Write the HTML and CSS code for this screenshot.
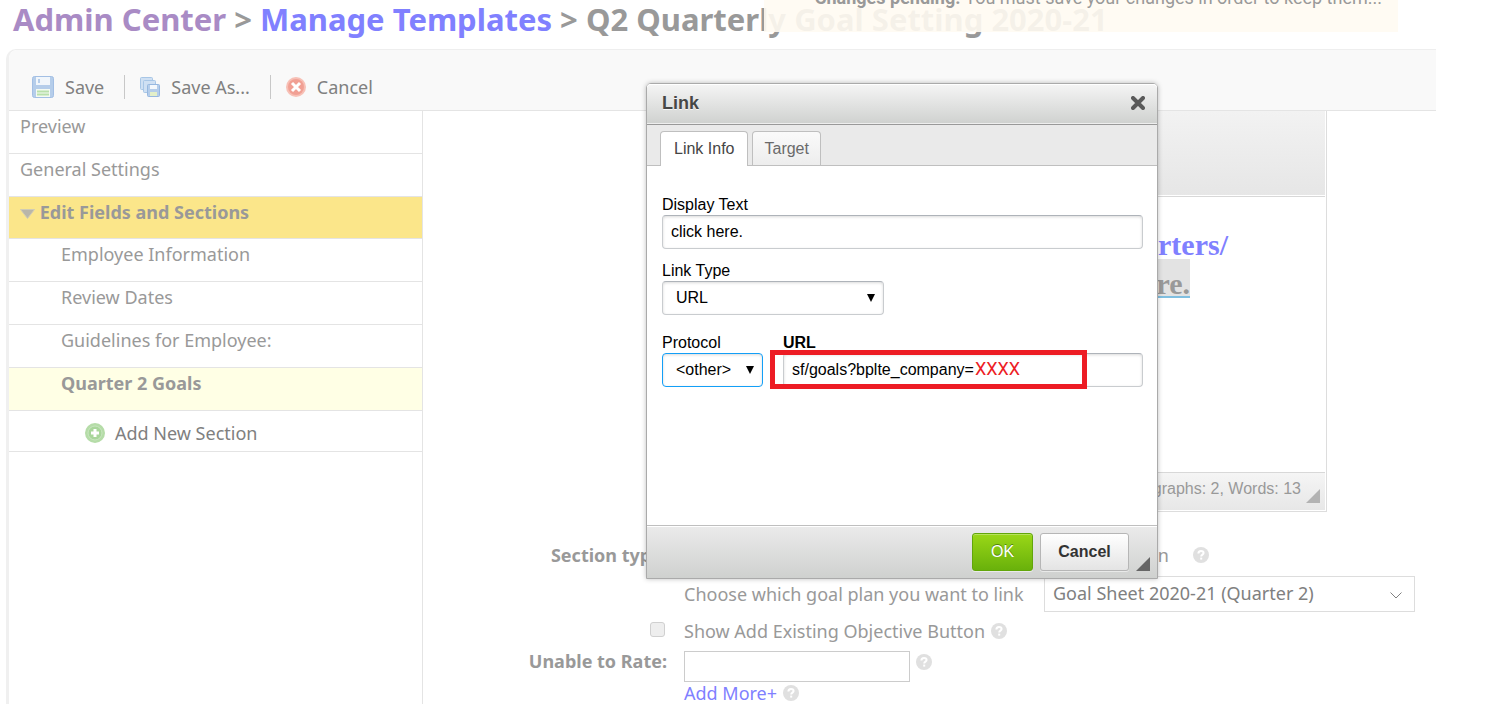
FILE: index.html
```html
<!DOCTYPE html>
<html lang="en">

<head>
  <meta charset="UTF-8">
  <meta name="viewport" content="width=device-width, initial-scale=1.0">
  <title>Manage Templates | Admin Center</title>
  <link rel="stylesheet" href="styles.css">
</head>

<body>
  <svg width="0" height="0" class="symbols" aria-hidden="true">
    <symbol id="icon-help" viewBox="0 0 16 16">
      <circle cx="8" cy="8" r="8" fill="#e0e0e0" />
      <path d="M5.4 6.4C5.4 4.700 6.500 3.900 8 3.900s2.600.8 2.600 2.200C10.600 7.700 8.200 7.700 8.200 9.600" fill="none" stroke="#fff" stroke-width="2" />
      <rect x="7.200" y="10.600" width="2" height="2" fill="#fff" />
    </symbol>
  </svg>

  <!-- Breadcrumb title -->
  <header>
    <h1><a href="#" class="visited">Admin Center</a> &gt; <a href="#">Manage Templates</a> &gt; Q2 Quarterly Goal Setting 2020-21</h1>
    <div class="notice">
      <svg width="14" height="14" viewBox="0 0 14 14" aria-hidden="true"><rect width="14" height="14" rx="2" fill="#ffd699" /></svg>
      <p><strong>Changes pending.</strong> You must save your changes in order to keep them...</p>
    </div>
  </header>

  <div class="panel">
    <div class="toolbar">
      <button type="button">
        <svg width="22" height="22" viewBox="0 0 22 22" aria-hidden="true">
          <rect x=".5" y=".5" width="21" height="21" rx="2" fill="#b5cdea" stroke="#a3bfe4" />
          <rect x="4" y="1" width="14" height="8" fill="#f1f6fb" />
          <rect x="6" y="3" width="2" height="4" fill="#b5cdea" />
          <rect x="4" y="13" width="14" height="8" fill="#f4faf2" />
          <path d="M5 15.500h12M5 18.500h12" stroke="#b9e0ab" stroke-width="2" />
        </svg>
        Save
      </button>
      <button type="button">
        <svg width="20" height="20" viewBox="0 0 20 20" aria-hidden="true">
          <rect x=".5" y=".5" width="12" height="12" rx="1" fill="#cfe0f3" stroke="#a8c6e6" />
          <rect x="3.500" y="3.500" width="12" height="12" rx="1" fill="#cfe0f3" stroke="#a8c6e6" />
          <rect x="7.500" y="7.500" width="12" height="12" rx="1" fill="#b5cdea" stroke="#97b8e0" />
          <rect x="10" y="8" width="7" height="4" fill="#f4f8fc" />
          <rect x="10" y="15" width="7" height="4" fill="#e3efc9" />
        </svg>
        Save As...
      </button>
      <button type="button">
        <svg width="20" height="20" viewBox="0 0 20 20" aria-hidden="true">
          <circle cx="10" cy="10" r="10" fill="#f7c0b6" />
          <circle cx="10" cy="10" r="8" fill="#f1a094" />
          <path d="M6 6l8 8M14 6l-8 8" stroke="#fff" stroke-width="3" />
        </svg>
        Cancel
      </button>
    </div>

    <div class="columns">
      <!-- Sections list -->
      <nav class="sidebar">
        <a href="#">Preview</a>
        <a href="#">General Settings</a>
        <a href="#" class="open">
          <svg width="15" height="10" viewBox="0 0 15 10" aria-hidden="true"><path d="M.5.5h14L7.500 9.500z" fill="#b9b6a9" stroke="#cfcbb5" /></svg>
          Edit Fields and Sections
        </a>
        <a href="#" class="sub">Employee Information</a>
        <a href="#" class="sub">Review Dates</a>
        <a href="#" class="sub">Guidelines for Employee:</a>
        <a href="#" class="sub current">Quarter 2 Goals</a>
        <button type="button" class="add-section">
          <svg width="20" height="20" viewBox="0 0 20 20" aria-hidden="true">
            <circle cx="10" cy="10" r="10" fill="#b5dca8" />
            <circle cx="10" cy="10" r="7" fill="#a9d69b" stroke="#c9e6c0" />
            <path d="M10 6v8M6 10h8" stroke="#fff" stroke-width="3" />
          </svg>
          Add New Section
        </button>
      </nav>

      <main>
        <div class="editor">
          <div class="editor-top"></div>
          <div class="editor-text">
            <p><a href="#">Quarters/</a></p>
            <p class="second"><mark>click here.</mark></p>
          </div>
          <div class="editor-bottom">
            <span>Paragraphs: 2, Words: 13</span>
            <svg width="14" height="14" viewBox="0 0 14 14" aria-hidden="true"><path d="M14 0v14H0z" fill="#b3b3b3" /></svg>
          </div>
        </div>

        <form class="settings">
          <span class="name">Section type:</span>
          <div class="field section-type">
            <span class="type-value">Goal Section</span>
            <svg class="help" width="16" height="16"><use href="#icon-help" /></svg>
          </div>

          <label for="goal-plan" class="plan-label">Choose which goal plan you want to link</label>
          <div class="select-box">
            <select id="goal-plan">
              <option>Goal Sheet 2020-21 (Quarter 2)</option>
            </select>
            <svg width="12" height="7" viewBox="0 0 12 7" aria-hidden="true"><path d="M.5.5L6 6 11.500.5" fill="none" stroke="#808080" /></svg>
          </div>

          <input type="checkbox" id="show-add">
          <div class="field">
            <label for="show-add">Show Add Existing Objective Button</label>
            <svg class="help" width="16" height="16"><use href="#icon-help" /></svg>
          </div>

          <label for="unable" class="name unable">Unable to Rate:</label>
          <div class="field top">
            <input type="text" id="unable">
            <svg class="help" width="16" height="16"><use href="#icon-help" /></svg>
          </div>

          <div class="field more">
            <a href="#">Add More+</a>
            <svg class="help" width="16" height="16"><use href="#icon-help" /></svg>
          </div>
        </form>
      </main>
    </div>
  </div>

  <!-- Link dialog -->
  <div class="dialog" role="dialog" aria-labelledby="dialog-title">
    <div class="dialog-title">
      <h2 id="dialog-title">Link</h2>
      <button type="button" class="close" aria-label="Close">
        <svg width="14" height="14" viewBox="0 0 14 14"><path d="M2 2l10 10M12 2L2 12" stroke="#5a5a5a" stroke-width="4" stroke-linecap="round" /></svg>
      </button>
    </div>
    <div class="tabs">
      <a href="#" class="tab active">Link Info</a>
      <a href="#" class="tab">Target</a>
    </div>
    <div class="dialog-body">
      <div class="row">
        <label for="display-text">Display Text</label>
        <input type="text" id="display-text" value="click here.">
      </div>
      <div class="row">
        <label for="link-type">Link Type</label>
        <div class="arrow link-type">
          <select id="link-type">
            <option>URL</option>
          </select>
        </div>
      </div>
      <div class="row split">
        <div class="protocol">
          <label for="protocol">Protocol</label>
          <div class="arrow">
            <select id="protocol" class="focused">
              <option>&lt;other&gt;</option>
            </select>
          </div>
        </div>
        <div class="url">
          <label for="url" class="required">URL</label>
          <input type="text" id="url" value="sf/goals?bplte_company=">
          <div class="highlight"><span>XXXX</span></div>
        </div>
      </div>
    </div>
    <div class="dialog-buttons">
      <button type="button" class="ok">OK</button>
      <button type="button" class="cancel">Cancel</button>
      <svg width="14" height="14" viewBox="0 0 14 14" aria-hidden="true"><path d="M14 0v14H0z" fill="#666" /></svg>
    </div>
  </div>
</body>

</html>
```
FILE: styles.css
```css
* {
  box-sizing: border-box;
}

body {
  margin: 0;
  padding: 0 60px 10px 6px;
  min-height: 100vh;
  display: flex;
  flex-direction: column;
  font-family: "Noto Sans", "Open Sans", sans-serif;
  font-size: 18px;
  line-height: 24px;
  color: #999;
  background: #fff;
  overflow: hidden;
}

a {
  color: #8080ff;
  text-decoration: none;
}

h1,
h2,
p {
  margin: 0;
}

button {
  font: inherit;
  color: inherit;
  background: none;
  border: none;
  padding: 0;
  cursor: pointer;
}

input,
select {
  font: inherit;
  color: inherit;
}

select {
  appearance: none;
}

.symbols {
  position: absolute;
}

header {
  padding: 0 0 11px 7px;
}

h1 {
  font-size: 31px;
  line-height: 38px;
  white-space: nowrap;
}

.visited {
  color: #a98bc5;
}

.notice {
  position: absolute;
  top: -18px;
  left: 764px;
  right: 98px;
  height: 50px;
  padding: 4px 16px;
  display: flex;
  gap: 26px;
  background: rgba(255, 251, 242, 0.9);
  font-family: Roboto, sans-serif;
  white-space: nowrap;
}

/* Panel */
.panel {
  flex: 1;
  border-top: 1px solid #eee;
  border-left: 3px solid #f0f0f0;
  border-top-left-radius: 10px;
  display: flex;
  flex-direction: column;
}

.toolbar {
  height: 61px;
  padding: 13px 23px 0;
  display: flex;
  align-items: center;
  background: #f9f9f9;
  border-bottom: 1px solid #e4e4e4;
  border-top-left-radius: 8px;
  color: #808080;
}

.toolbar button {
  display: flex;
  align-items: center;
  gap: 11px;
}

.toolbar button + button {
  margin-left: 20px;
  padding-left: 15px;
  border-left: 1px solid #c8c8c8;
}

.columns {
  flex: 1;
  display: flex;
}

.sidebar {
  width: 414px;
  border-right: 1px solid #e4e4e4;
}

.sidebar a {
  display: block;
  height: 43px;
  padding: 3px 11px;
  border-bottom: 1px solid #e4e4e4;
  color: #999;
}

.sidebar .open {
  height: 42px;
  background: #fbe68a;
  font-weight: bold;
}

.sidebar .sub {
  padding-left: 52px;
}

.sidebar .current {
  background: #ffffe5;
  font-weight: bold;
}

.add-section {
  width: 100%;
  height: 41px;
  padding: 3px 76px 0;
  display: flex;
  align-items: center;
  gap: 10px;
  border-bottom: 1px solid #e4e4e4;
  color: #808080;
}

main {
  flex: 1;
}

/* Editor */
.editor {
  margin-left: 261px;
  width: 643px;
  border: 1px solid #ddd;
  border-top: none;
  padding: 0 1px 1px;
}

.editor-top {
  height: 86px;
  background: linear-gradient(#f2f2f2, #e6e6e6);
  border-bottom: 1px solid #d8d8d8;
  box-shadow: inset 0 -1px #fff;
}

.editor-text {
  height: 275px;
  padding: 28px 97px 0;
  font-family: "Liberation Serif", serif;
  font-size: 30px;
  line-height: 39px;
  font-weight: bold;
  text-align: right;
}

.editor-text .second {
  padding-right: 38px;
}

mark {
  display: inline-block;
  margin-top: -10px;
  padding-top: 11px;
  line-height: 28px;
  color: #999;
  background: #e3e3e3;
  text-decoration: underline 2px #80bfe0;
  text-underline-offset: 2px;
}

.editor-bottom {
  height: 38px;
  padding: 4px 5px 7px;
  display: flex;
  justify-content: flex-end;
  gap: 5px;
  border-top: 1px solid #d8d8d8;
  background: linear-gradient(#f5f5f5, #e7e7e7);
  font-family: "Liberation Sans", Arial, sans-serif;
  font-size: 16px;
}

.editor-bottom svg {
  align-self: flex-end;
}

/* Section settings */
.settings {
  padding-top: 23px;
  display: grid;
  grid-template-columns: 244px 343px 1fr;
  grid-template-rows: 40px 38px 36px 33px 22px;
  column-gap: 17px;
  align-items: center;
}

.name {
  font-weight: bold;
  text-align: right;
}

.field {
  grid-column: 2 / 4;
  display: flex;
  align-items: center;
  gap: 6px;
}

.section-type {
  gap: 24px;
}

.type-value {
  width: 485px;
  text-align: right;
}

.plan-label {
  grid-column: 2;
  white-space: nowrap;
}

.select-box {
  position: relative;
  width: 371px;
}

.select-box select {
  width: 100%;
  height: 36px;
  padding: 0 8px 2px;
  border: 1px solid #ddd;
  border-radius: 0;
  background: #fff;
  color: #808080;
}

.select-box svg {
  position: absolute;
  right: 13px;
  top: 16px;
}

#show-add {
  appearance: none;
  justify-self: end;
  width: 15px;
  height: 15px;
  margin: 0 2px 4px;
  border: 1px solid #d0d0d0;
  border-radius: 3px;
  background: #eee;
}

.unable {
  align-self: start;
}

.top {
  align-items: flex-start;
  padding-top: 1px;
}

#unable {
  width: 226px;
  height: 31px;
  border: 1px solid #ccc;
}

.top .help {
  margin-top: 3px;
}

/* Dialog */
.dialog {
  position: absolute;
  top: 83px;
  left: 646px;
  width: 512px;
  border: 1px solid #aaa;
  border-radius: 5px 5px 0 0;
  background: #fff;
  box-shadow: 0 0 5px rgba(0, 0, 0, 0.25);
  color: #000;
  font-family: "Liberation Sans", Arial, sans-serif;
  font-size: 16px;
  line-height: 20px;
}

.dialog-title {
  height: 41px;
  padding: 0 12px 2px 15px;
  display: flex;
  justify-content: space-between;
  align-items: center;
  border-bottom: 1px solid #999;
  border-radius: 4px 4px 0 0;
  background: linear-gradient(#f5f5f5, #cfd1cf);
  box-shadow: inset 0 1px #fff, inset 0 -1px #eee;
}

.dialog-title h2 {
  font-size: 18px;
  line-height: 20px;
  color: #474747;
  text-shadow: 0 1px 0 rgba(255, 255, 255, 0.75);
}

.close {
  display: flex;
}

.tabs {
  height: 41px;
  padding: 6px 13px 0;
  display: flex;
  gap: 4px;
  background: #eaeaea;
  border-bottom: 1px solid #bfbfbf;
}

.tab {
  height: 34px;
  padding: 0 11px;
  line-height: 34px;
  border: 1px solid #bfbfbf;
  border-bottom: none;
  border-radius: 4px 4px 0 0;
  background: linear-gradient(#fafafa, #ededed);
  color: #6a6a6a;
}

.tab.active {
  height: 35px;
  padding: 0 13px;
  background: #fff;
  color: #454545;
}

.dialog-body {
  height: 359px;
  padding: 29px 14px 0 15px;
}

.row {
  margin-bottom: 12px;
}

.row label {
  display: block;
}

.row input,
.row select {
  display: block;
  width: 100%;
  height: 34px;
  padding: 0 8px;
  border: 1px solid #c9cccf;
  border-top-color: #aeb3b9;
  border-radius: 4px;
  background: #fff;
  box-shadow: inset 0 1px 3px rgba(0, 0, 0, 0.15);
}

.row select {
  padding-left: 13px;
}

.row .focused {
  border-color: #139ff7;
}

.arrow {
  position: relative;
}

.arrow::after {
  content: "";
  position: absolute;
  right: 9px;
  top: 13px;
  border: 4px solid transparent;
  border-top: 8px solid #000;
  border-bottom: none;
}

.link-type {
  width: 222px;
}

.split {
  display: flex;
  gap: 20px;
  padding-top: 6px;
}

.protocol {
  width: 101px;
}

.url {
  flex: 1;
  position: relative;
}

.required {
  font-weight: bold;
}

.highlight {
  position: absolute;
  top: 17px;
  left: -13px;
  width: 317px;
  height: 39px;
  padding-left: 200px;
  border: 5px solid #ed1c24;
  color: #ed1c24;
  font-family: Roboto, sans-serif;
  font-size: 18px;
  line-height: 28px;
}

.dialog-buttons {
  height: 53px;
  padding: 7px;
  display: flex;
  justify-content: flex-end;
  gap: 7px;
  border-top: 1px solid #bfbfbf;
  background: linear-gradient(#ebebeb, #cfd1cf);
  box-shadow: inset 0 1px #fff;
}

.dialog-buttons svg {
  align-self: flex-end;
}

.dialog-buttons button {
  height: 38px;
  border-radius: 3px;
  box-shadow: 0 1px 0 rgba(255, 255, 255, 0.5), inset 0 1px 0 rgba(255, 255, 255, 0.3);
}

.dialog-buttons .ok {
  width: 61px;
  border: 1px solid #62a60a;
  background: linear-gradient(#9ad717, #69b10b);
  color: #fff;
  text-shadow: 0 -1px 0 rgba(55, 95, 10, 0.7);
}

.dialog-buttons .cancel {
  width: 89px;
  border: 1px solid #b6b6b6;
  background: linear-gradient(#fff, #e4e4e4);
  color: #333;
  font-weight: bold;
}
```
